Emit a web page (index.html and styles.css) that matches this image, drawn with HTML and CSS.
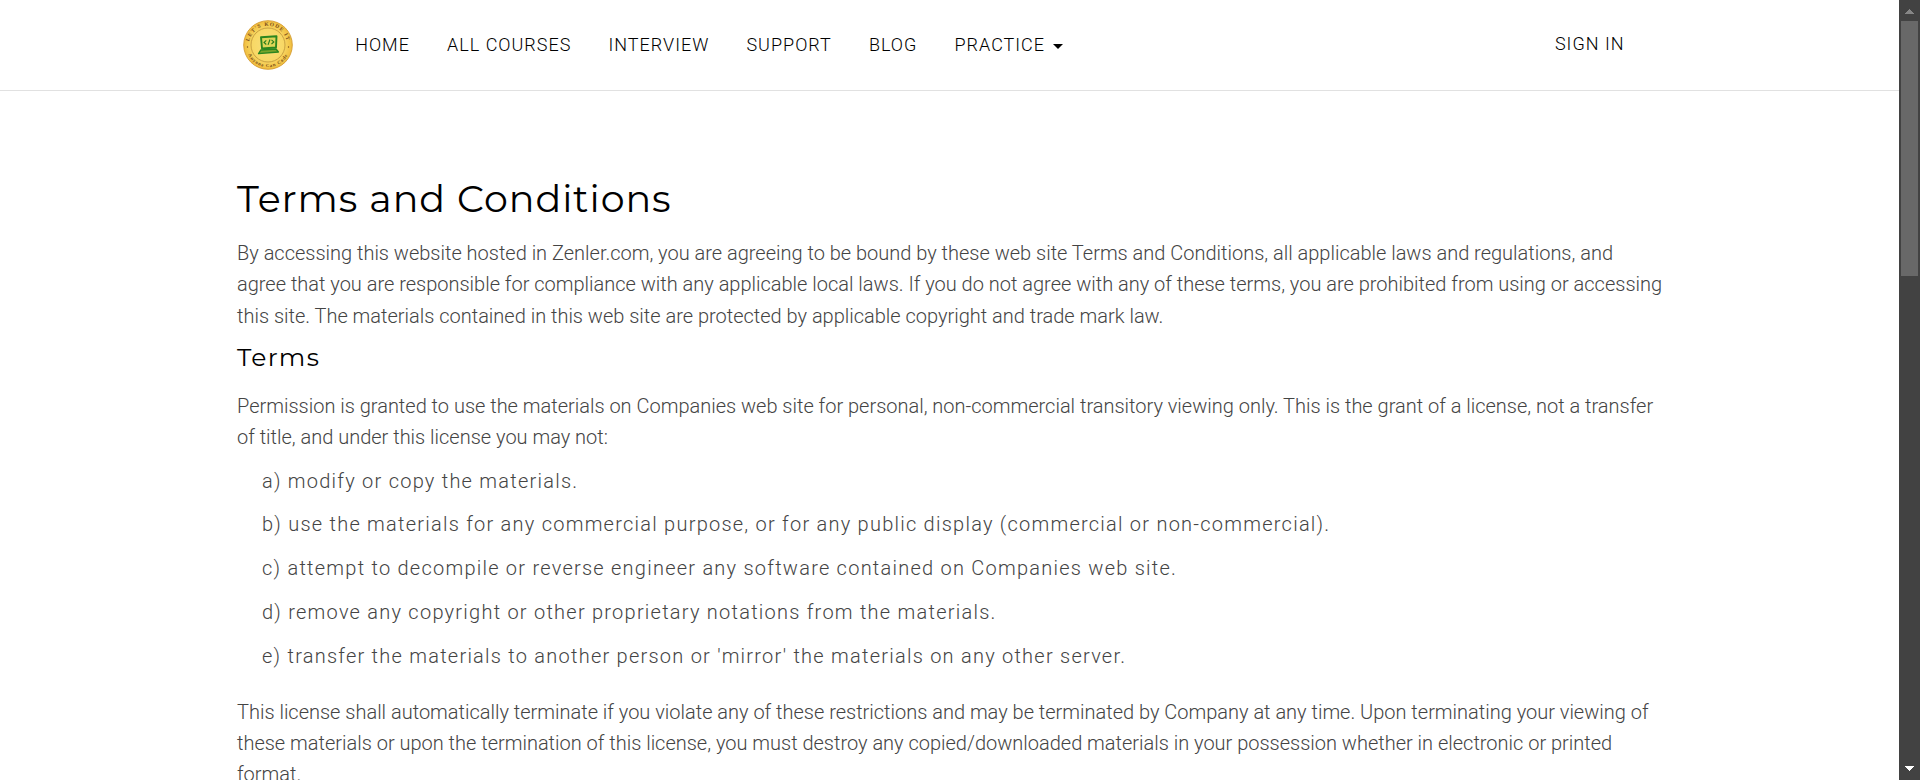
FILE: index.html
```html
<!DOCTYPE html>
<html lang="en">
<head>
<meta charset="utf-8">
<title>Terms and Conditions</title>
<link rel="stylesheet" href="styles.css">
</head>
<body>
<div class="viewport">
  <div class="page">
    <header class="header">
      <a class="logo">
        <svg width="52" height="52" viewBox="0 0 52 52">
          <defs>
            <radialGradient id="gold"><stop offset="0" stop-color="#f8df7c"/><stop offset=".65" stop-color="#f8d865"/><stop offset="1" stop-color="#f0bd3e"/></radialGradient>
            <path id="top-arc" d="M6.8 26a19.2 19.2 0 0 1 38.4 0"/>
            <path id="bottom-arc" d="M3.8 26a22.2 22.2 0 0 0 44.4 0"/>
          </defs>
          <circle cx="26" cy="26" r="24.3" fill="url(#gold)" stroke="#d59c32" stroke-width=".9"/>
          <circle cx="26" cy="26" r="17" fill="none" stroke="#b58b35" stroke-width=".7"/>
          <text class="seal-text" font-size="5.4" letter-spacing="1"><textPath href="#top-arc" startOffset="50%" text-anchor="middle">LET'S KODE IT</textPath></text>
          <text class="seal-text" font-size="4.8" letter-spacing=".8"><textPath href="#bottom-arc" startOffset="50%" text-anchor="middle">Anyone Can Code</textPath></text>
          <circle cx="5.5" cy="28" r=".7" fill="#7a4c18"/><circle cx="46.5" cy="28" r=".7" fill="#7a4c18"/>
          <path d="M19 18.2l15.5-1-.5 11.3-14 1z" fill="#dfd557" stroke="#2b861f" stroke-width="1.9" stroke-linejoin="round"/>
          <path d="M18.8 31l15.2-1 2.4 3-19.8 1.6z" fill="#78a42b" stroke="#2b861f" stroke-width="1.4" stroke-linejoin="round"/>
          <path d="M24.3 21.3L22 23.5l2.3 2M29.5 20.9l2.3 2-2.3 2.1M28 20.5l-2 5.4" fill="none" stroke="#277c1d" stroke-width="1.1"/>
        </svg>
      </a>
      <nav class="nav">
        <a>HOME</a><a>ALL COURSES</a><a>INTERVIEW</a><a>SUPPORT</a><a>BLOG</a><a class="dropdown">PRACTICE<span class="caret"></span></a>
      </nav>
      <a class="sign-in">SIGN IN</a>
    </header>
    <main class="content">
      <h1>Terms and Conditions</h1>
      <p>By accessing this website hosted in Zenler.com, you are agreeing to be bound by these web site Terms and Conditions, all applicable laws and regulations, and agree that you are responsible for compliance with any applicable local laws. If you do not agree with any of these terms, you are prohibited from using or accessing this site. The materials contained in this web site are protected by applicable copyright and trade mark law.</p>
      <h2>Terms</h2>
      <p>Permission is granted to use the materials on Companies web site for personal, non-commercial transitory viewing only. This is the grant of a license, not a transfer of title, and under this license you may not:</p>
      <ul class="terms-list">
        <li>a) modify or copy the materials.</li>
        <li>b) use the materials for any commercial purpose, or for any public display (commercial or non-commercial).</li>
        <li>c) attempt to decompile or reverse engineer any software contained on Companies web site.</li>
        <li>d) remove any copyright or other proprietary notations from the materials.</li>
        <li>e) transfer the materials to another person or 'mirror' the materials on any other server.</li>
      </ul>
      <p>This license shall automatically terminate if you violate any of these restrictions and may be terminated by Company at any time. Upon terminating your viewing of these materials or upon the termination of this license, you must destroy any copied/downloaded materials in your possession whether in electronic or printed format.</p>
    </main>
  </div>
  <div class="scrollbar">
    <svg class="arrow" width="9" height="5" viewBox="0 0 9 5" shape-rendering="crispEdges"><path d="M0 5L4.5 0 9 5z" fill="#868686"/></svg>
    <div class="thumb"></div>
    <svg class="arrow" width="9" height="5" viewBox="0 0 9 5" shape-rendering="crispEdges"><path d="M0 0h9L4.5 5z" fill="#fff"/></svg>
  </div>
</div>
</body>
</html>
```
FILE: styles.css
```css
* { box-sizing: border-box; }
body { margin: 0; background: #fff; font-family: Roboto, sans-serif; overflow: hidden; }
.viewport { display: flex; height: 780px; overflow: hidden; }
.page { flex: 1; overflow: hidden; }
.header { display: flex; align-items: flex-start; height: 91px; padding: 18px 274.5px 0 242px; border-bottom: 1px solid #e1e1e1; font-size: 18px; font-weight: 300; line-height: 24px; letter-spacing: 1px; color: #000; }
.logo { width: 52px; height: 52px; padding-top: 1px; }
.logo svg { display: block; }
.seal-text { font-family: "Liberation Serif", serif; font-weight: 700; fill: #7a4c18; }
.nav { display: flex; gap: 37.1px; margin: 15px auto 0 61.2px; }
.sign-in { margin-top: 14px; }
.dropdown { display: flex; align-items: center; }
.caret { margin: 3px 0 0 8px; border: 5px solid transparent; border-top-color: #000; border-bottom: 0; }
.content { padding: 83px 235px 0 237px; color: #444; }
h1, h2 { font-family: Montserrat, sans-serif; font-weight: 400; color: #000; white-space: nowrap; }
h1 { margin: 0 0 14px; font-size: 38px; line-height: 50px; letter-spacing: .97px; }
h2 { margin: 10px 0 18.6px; font-size: 25px; line-height: 30px; letter-spacing: 1.3px; }
p { margin: 0; font-size: 20px; font-weight: 300; line-height: 31.4px; letter-spacing: -.008px; }
.terms-list { list-style: none; margin: 12px 0 24px; padding: 0 0 0 25px; font-size: 20px; font-weight: 300; line-height: 31.8px; letter-spacing: 1.24px; display: grid; gap: 12px; }
.scrollbar { display: flex; flex-direction: column; align-items: center; width: 21px; background: #424242; padding: 9px 0; }
.thumb { width: 17px; height: 255px; margin: 7px 0 auto; background: #686868; }
```
